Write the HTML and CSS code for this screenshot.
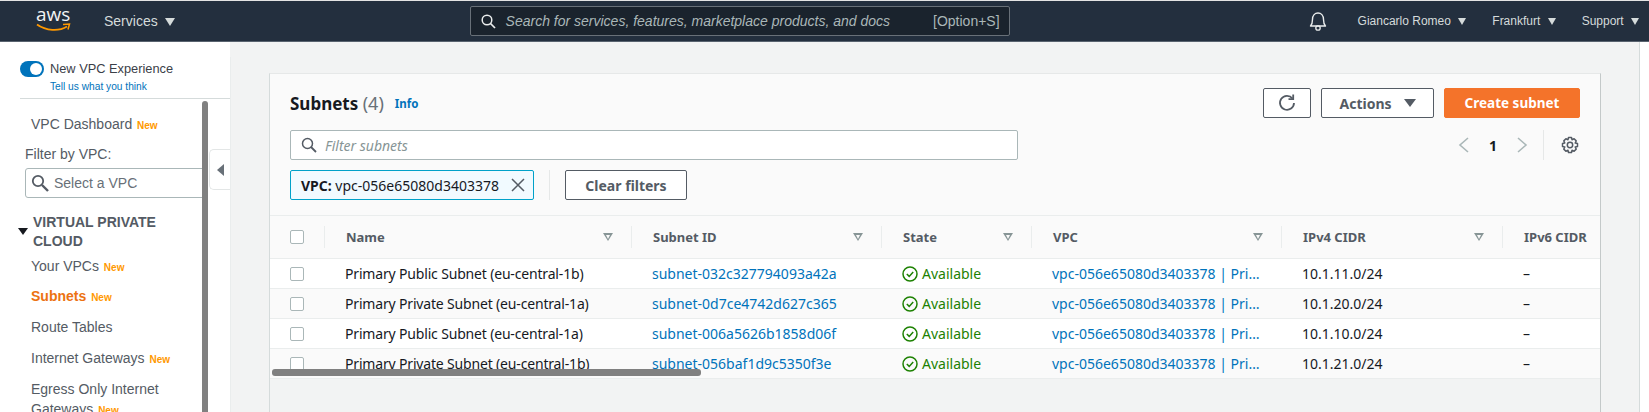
FILE: index.html
```html
<!DOCTYPE html>
<html>
  <head>
    <meta name="viewport" content="width=device-width, initial-scale=1" />
    <link rel="stylesheet" href="styles.css">
  </head>
  <body>
    <header class="topbar">
      <div class="logo">
        <span class="logo-text">aws</span>
        <svg class="logo-smile" width="36" height="9" viewBox="0 0 36 9"><path d="M1 1.5C10 8 23 8.500 31 3.500" fill="none" stroke="#f90" stroke-width="1.800"/><path d="M27 1.500L33.500 1L32 6.500" fill="none" stroke="#f90" stroke-width="1.500"/></svg>
      </div>
      <span class="top-link services">Services <i class="caret caret-top"></i></span>
      <div class="top-search">
        <svg width="15" height="15" viewBox="0 0 15 15"><circle cx="6" cy="6" r="4.800" fill="none" stroke="#eaeded" stroke-width="1.500"/><path d="M9.500 9.500L14 14" stroke="#eaeded" stroke-width="1.700"/></svg>
        <span class="top-search-text">Search for services, features, marketplace products, and docs</span>
        <span class="top-search-key">[Option+S]</span>
      </div>
      <div class="top-right">
        <svg class="bell" width="18" height="20" viewBox="0 0 18 20"><path d="M1.500 15C3.500 13 3.500 11.500 3.500 8.500C3.500 4.500 6 2 9 2C12 2 14.500 4.500 14.500 8.500C14.500 11.500 14.500 13 16.500 15Z" fill="none" stroke="#eaeded" stroke-width="1.400" stroke-linejoin="round"/><circle cx="9" cy="17" r="2.200" fill="none" stroke="#eaeded" stroke-width="1.300"/></svg>
        <span class="top-link user">Giancarlo Romeo <i class="caret caret-top"></i></span>
        <span class="top-link region">Frankfurt <i class="caret caret-top"></i></span>
        <span class="top-link support">Support <i class="caret caret-top"></i></span>
      </div>
    </header>

    <div class="page">
      <nav class="sidebar">
        <div class="experience">
          <span class="toggle"></span>
          <div>
            <div class="experience-title">New VPC Experience</div>
            <a class="experience-link">Tell us what you think</a>
          </div>
        </div>
        <div class="nav-item nav-dash">VPC Dashboard <span class="new">New</span></div>
        <div class="filter-label">Filter by VPC:</div>
        <div class="vpc-select">
          <svg width="18" height="18" viewBox="0 0 18 18"><circle cx="7" cy="7" r="5.200" fill="none" stroke="#545b64" stroke-width="1.800"/><path d="M11 11L17 17" stroke="#545b64" stroke-width="2.400"/></svg>
          <span>Select a VPC</span>
        </div>
        <div class="nav-group">
          <i class="group-caret"></i>
          <span>VIRTUAL PRIVATE CLOUD</span>
        </div>
        <div class="nav-item nav-first">Your VPCs <span class="new">New</span></div>
        <div class="nav-item nav-active">Subnets <span class="new">New</span></div>
        <div class="nav-item">Route Tables</div>
        <div class="nav-item">Internet Gateways <span class="new">New</span></div>
        <div class="nav-item nav-wrap">Egress Only Internet Gateways <span class="new">New</span></div>
        <div class="side-scroll"></div>
        <div class="collapse-tab"><i></i></div>
      </nav>

      <main class="content">
        <section class="card">
          <div class="card-head">
            <div class="title-row">
              <h1>Subnets <span class="count">(4)</span></h1>
              <a class="info">Info</a>
              <div class="actions">
                <button class="btn btn-icon" type="button">
                  <svg width="18" height="18" viewBox="0 0 18 18"><path d="M14.500 4.500A7 7 0 1 0 16 9" fill="none" stroke="#545b64" stroke-width="1.800"/><path d="M10.500 5.200H15.200V.5" fill="none" stroke="#545b64" stroke-width="1.800"/></svg>
                </button>
                <button class="btn btn-actions" type="button">Actions <i class="caret caret-btn"></i></button>
                <button class="btn btn-primary" type="button">Create subnet</button>
              </div>
            </div>
            <div class="filter-row">
              <div class="filter-input">
                <svg width="16" height="16" viewBox="0 0 16 16"><circle cx="6.500" cy="6.500" r="5" fill="none" stroke="#545b64" stroke-width="1.500"/><path d="M10 10L15 15" stroke="#545b64" stroke-width="1.800"/></svg>
                <span>Filter subnets</span>
              </div>
              <div class="pager">
                <svg width="12" height="18" viewBox="0 0 12 18"><path d="M10 2L2 9L10 16" fill="none" stroke="#aab7b8" stroke-width="1.600"/></svg>
                <b>1</b>
                <svg width="12" height="18" viewBox="0 0 12 18"><path d="M2 2L10 9L2 16" fill="none" stroke="#aab7b8" stroke-width="1.600"/></svg>
                <span class="pager-sep"></span>
                <svg width="18" height="18" viewBox="0 0 18 18"><circle cx="9" cy="9" r="2.700" fill="none" stroke="#545b64" stroke-width="1.500"/><path d="M7.500 1.500H10.500L11 3.700L13.100 2.800L15.200 4.900L14.200 7L16.500 7.500V10.500L14.200 11L15.200 13.100L13.100 15.200L11 14.300L10.500 16.500H7.500L7 14.300L4.900 15.200L2.800 13.100L3.800 11L1.500 10.500V7.500L3.800 7L2.800 4.900L4.900 2.800L7 3.700Z" fill="none" stroke="#545b64" stroke-width="1.500" stroke-linejoin="round"/></svg>
              </div>
            </div>
            <div class="chip-row">
              <div class="chip"><span><b>VPC:</b> vpc-056e65080d3403378</span>
                <svg width="14" height="14" viewBox="0 0 14 14"><path d="M1 1L13 13M13 1L1 13" stroke="#545b64" stroke-width="1.500"/></svg>
              </div>
              <span class="chip-sep"></span>
              <button class="btn btn-clear" type="button">Clear filters</button>
            </div>
          </div>

          <div class="table-wrap">
            <table class="subnets">
              <colgroup>
                <col class="col-check"><col class="col-name"><col class="col-id"><col class="col-state"><col class="col-vpc"><col class="col-cidr"><col class="col-v6">
              </colgroup>
              <thead>
                <tr>
                  <th class="cell-check"><i class="check"></i></th>
                  <th><div class="th-in">Name <i class="sort"></i></div></th>
                  <th><div class="th-in">Subnet ID <i class="sort"></i></div></th>
                  <th><div class="th-in">State <i class="sort"></i></div></th>
                  <th><div class="th-in">VPC <i class="sort"></i></div></th>
                  <th><div class="th-in">IPv4 CIDR <i class="sort"></i></div></th>
                  <th><div class="th-in">IPv6 CIDR</div></th>
                </tr>
              </thead>
              <tbody>
                <tr>
                  <td class="cell-check"><i class="check"></i></td>
                  <td class="cell-name">Primary Public Subnet (eu-central-1b)</td>
                  <td><a>subnet-032c327794093a42a</a></td>
                  <td><span class="state"><svg width="16" height="16" viewBox="0 0 16 16"><circle cx="8" cy="8" r="7" fill="none" stroke="#1d8102" stroke-width="1.500"/><path d="M4.800 8L7.200 10.400L11.200 6" fill="none" stroke="#1d8102" stroke-width="1.500"/></svg>Available</span></td>
                  <td><a>vpc-056e65080d3403378 | Pri…</a></td>
                  <td>10.1.11.0/24</td>
                  <td>–</td>
                </tr>
                <tr>
                  <td class="cell-check"><i class="check"></i></td>
                  <td class="cell-name">Primary Private Subnet (eu-central-1a)</td>
                  <td><a>subnet-0d7ce4742d627c365</a></td>
                  <td><span class="state"><svg width="16" height="16" viewBox="0 0 16 16"><circle cx="8" cy="8" r="7" fill="none" stroke="#1d8102" stroke-width="1.500"/><path d="M4.800 8L7.200 10.400L11.200 6" fill="none" stroke="#1d8102" stroke-width="1.500"/></svg>Available</span></td>
                  <td><a>vpc-056e65080d3403378 | Pri…</a></td>
                  <td>10.1.20.0/24</td>
                  <td>–</td>
                </tr>
                <tr>
                  <td class="cell-check"><i class="check"></i></td>
                  <td class="cell-name">Primary Public Subnet (eu-central-1a)</td>
                  <td><a>subnet-006a5626b1858d06f</a></td>
                  <td><span class="state"><svg width="16" height="16" viewBox="0 0 16 16"><circle cx="8" cy="8" r="7" fill="none" stroke="#1d8102" stroke-width="1.500"/><path d="M4.800 8L7.200 10.400L11.200 6" fill="none" stroke="#1d8102" stroke-width="1.500"/></svg>Available</span></td>
                  <td><a>vpc-056e65080d3403378 | Pri…</a></td>
                  <td>10.1.10.0/24</td>
                  <td>–</td>
                </tr>
                <tr>
                  <td class="cell-check"><i class="check"></i></td>
                  <td class="cell-name">Primary Private Subnet (eu-central-1b)</td>
                  <td><a>subnet-056baf1d9c5350f3e</a></td>
                  <td><span class="state"><svg width="16" height="16" viewBox="0 0 16 16"><circle cx="8" cy="8" r="7" fill="none" stroke="#1d8102" stroke-width="1.500"/><path d="M4.800 8L7.200 10.400L11.200 6" fill="none" stroke="#1d8102" stroke-width="1.500"/></svg>Available</span></td>
                  <td><a>vpc-056e65080d3403378 | Pri…</a></td>
                  <td>10.1.21.0/24</td>
                  <td>–</td>
                </tr>
              </tbody>
            </table>
            <div class="table-scroll"></div>
          </div>
        </section>
      </main>
      <div class="right-rail"></div>
    </div>
  </body>
</html>
```
FILE: styles.css
```css
html,
body {
  margin: 0;
  height: 412px;
  overflow: hidden;
}

body {
  background: #f2f3f3;
  font-family: "Liberation Sans", Arial, sans-serif;
  color: #16191f;
}

/* top bar */
.topbar {
  display: flex;
  align-items: center;
  height: 40px;
  background: #232f3e;
  border-top: 1px solid #e4e4e4;
  border-bottom: 1px solid #59636f;
  color: #d5dbdb;
  font-size: 14px;
}

.logo {
  position: relative;
  width: 34px;
  height: 32px;
  margin-left: 36px;
}

.logo-text {
  display: block;
  color: #f2f3f3;
  font-family: "Open Sans", sans-serif;
  font-size: 19px;
  line-height: 22px;
  text-align: center;
  transform: translateY(-2px);
}

.logo-smile {
  position: absolute;
  left: 0;
  top: 18px;
}

.top-link {
  white-space: nowrap;
}

.services {
  margin-left: 34px;
  font-size: 14px;
}

.caret {
  display: inline-block;
  width: 0;
  height: 0;
  border-left: 5px solid transparent;
  border-right: 5px solid transparent;
  border-top: 8px solid #d5dbdb;
}

.caret-top {
  margin-left: 4px;
}

.services .caret-top {
  margin-left: 3px;
}

.top-search {
  display: flex;
  align-items: center;
  box-sizing: border-box;
  width: 540px;
  height: 30px;
  margin-left: 295px;
  padding: 0 9px 0 10px;
  background: #1a232d;
  border: 1px solid #687078;
  border-radius: 2px;
  color: #aab7b8;
}

.top-search-text {
  flex: 1;
  margin-left: 10px;
  font-style: italic;
  white-space: nowrap;
}

.top-right {
  display: flex;
  align-items: center;
  margin-left: 299px;
  font-size: 12px;
  white-space: nowrap;
}

.user {
  margin-left: 31px;
}

.region {
  margin-left: 26px;
}

.support {
  margin-left: 26px;
}

.top-right .caret {
  border-left-width: 4.500px;
  border-right-width: 4.500px;
  border-top-width: 7px;
}

/* sidebar */
.page {
  display: flex;
  height: 370px;
}

.sidebar {
  position: relative;
  box-sizing: border-box;
  flex: 0 0 230px;
  height: 370px;
  overflow: hidden;
  background: #fff;
  color: #545b64;
}

.experience {
  display: flex;
  height: 38px;
  margin: 18px 0 0 20px;
  border-bottom: 1px solid #d5dbdb;
}

.toggle {
  position: relative;
  box-sizing: border-box;
  width: 24px;
  height: 16px;
  margin: 1px 6px 0 0;
  background: #0073bb;
  border-radius: 8px;
}

.toggle::after {
  content: "";
  position: absolute;
  right: 2px;
  top: 2px;
  width: 12px;
  height: 12px;
  background: #fff;
  border-radius: 50%;
}

.experience-title {
  font-size: 12.800px;
  line-height: 18px;
  color: #3b4048;
}

.experience-link {
  display: block;
  margin-top: 1px;
  font-size: 10.200px;
  line-height: 16px;
  color: #0073bb;
}

.nav-item {
  margin-left: 31px;
  font-size: 14px;
  line-height: 20px;
  height: 20px;
  margin-top: 10.750px;
}

.nav-dash {
  margin-top: 15px;
}

.new {
  margin-left: 1px;
  color: #ff9900;
  font-size: 10px;
  font-weight: 700;
}

.filter-label {
  margin: 10px 0 0 25px;
  font-size: 14px;
  line-height: 20px;
}

.vpc-select {
  display: flex;
  align-items: center;
  box-sizing: border-box;
  width: 180px;
  height: 30px;
  margin: 4px 0 0 25px;
  padding-left: 5px;
  border: 1px solid #aab7b8;
  border-radius: 3px;
  font-size: 14px;
  color: #687078;
}

.vpc-select span {
  margin-left: 5px;
}

.nav-group {
  position: relative;
  box-sizing: border-box;
  width: 170px;
  margin-top: 15px;
  padding-left: 33px;
  font-size: 14px;
  font-weight: 700;
  line-height: 18.500px;
}

.group-caret {
  position: absolute;
  left: 18px;
  top: 15px;
  width: 0;
  height: 0;
  border-left: 5px solid transparent;
  border-right: 5px solid transparent;
  border-top: 7px solid #16191f;
}

.nav-first {
  margin-top: 5.500px;
}

.nav-active {
  color: #ec7211;
  font-weight: 700;
}

.nav-wrap {
  width: 165px;
  height: auto;
}

.side-scroll {
  position: absolute;
  left: 202px;
  top: 59px;
  bottom: 0;
  width: 6px;
  background: #808080;
  border-radius: 3px 3px 0 0;
}

.collapse-tab {
  position: absolute;
  left: 209px;
  top: 107px;
  box-sizing: border-box;
  width: 21px;
  height: 41px;
  background: #fff;
  border: 1px solid #e3e6e6;
  border-right: 0;
  border-radius: 5px 0 0 5px;
}

.collapse-tab i {
  position: absolute;
  left: 7px;
  top: 14px;
  width: 0;
  height: 0;
  border-top: 6px solid transparent;
  border-bottom: 6px solid transparent;
  border-right: 7px solid #687078;
}

/* main */
.content {
  flex: 1;
  box-sizing: border-box;
  height: 355px;
  margin-top: 15px;
  padding: 16px 38px 0 38px;
  min-width: 0;
  border-left: 1px solid #eaeded;
}

.right-rail {
  flex: 0 0 9px;
  background: #fff;
  border-left: 1px solid #d5dbdb;
}

.card {
  box-sizing: border-box;
  height: 339px;
  border-left: 1px solid #d5dbdb;
  border-right: 1px solid #c4c9c9;
  border-top: 1px solid #e6e8e8;
}

.card-head {
  box-sizing: border-box;
  height: 141px;
  padding: 14px 20px 0;
  background: #fafafa;
  font-family: "Noto Sans", sans-serif;
}

.title-row {
  display: flex;
  align-items: center;
  height: 30px;
}

h1 {
  margin: 0;
  font-size: 17px;
  font-weight: 700;
  line-height: 30px;
}

.count {
  color: #687078;
  font-size: 18px;
  font-weight: 400;
}

.info {
  margin-left: 11px;
  color: #0073bb;
  font-size: 11.500px;
  font-weight: 700;
}

.actions {
  display: flex;
  gap: 10px;
  margin-left: auto;
}

.btn {
  display: flex;
  align-items: center;
  justify-content: center;
  box-sizing: border-box;
  height: 30px;
  background: #fff;
  border: 1px solid #545b64;
  border-radius: 2px;
  color: #545b64;
  font-family: "Noto Sans", sans-serif;
  font-size: 14px;
  font-weight: 700;
}

.btn-icon {
  width: 48px;
}

.btn-actions {
  width: 113px;
}

.caret-btn {
  margin-left: 12px;
  border-top-color: #545b64;
  border-left-width: 6px;
  border-right-width: 6px;
}

.btn-primary {
  width: 136px;
  background: #f4732a;
  border-color: #f4732a;
  color: #fff;
  font-size: 13.500px;
}

.filter-row {
  display: flex;
  align-items: center;
  justify-content: space-between;
  margin-top: 12px;
}

.filter-input {
  display: flex;
  align-items: center;
  box-sizing: border-box;
  width: 728px;
  height: 30px;
  padding-left: 10px;
  background: #fff;
  border: 1px solid #aab7b8;
  border-radius: 2px;
  color: #879596;
  font-size: 14px;
  font-style: italic;
}

.filter-input span {
  margin-left: 8px;
}

.pager {
  display: flex;
  align-items: center;
  height: 30px;
  margin-right: 1px;
}

.pager b {
  margin: 0 19px;
  font-size: 14px;
  color: #16191f;
}

.pager-sep {
  width: 1px;
  height: 30px;
  margin: 0 17px 0 15px;
  background: #e6e8e8;
}

.chip-row {
  display: flex;
  align-items: center;
  margin-top: 10px;
}

.chip {
  display: flex;
  align-items: center;
  justify-content: space-between;
  box-sizing: border-box;
  width: 244px;
  height: 30px;
  padding: 0 8px 0 10px;
  background: #f1faff;
  border: 1px solid #00a1c9;
  border-radius: 2px;
  font-size: 14px;
  white-space: nowrap;
}

.chip-sep {
  width: 1px;
  height: 30px;
  margin: 0 15px;
  background: #e6e8e8;
}

.btn-clear {
  width: 122px;
}

/* table */
.table-wrap {
  position: relative;
  font-family: "Noto Sans", sans-serif;
}

.subnets {
  width: 1330px;
  border-collapse: collapse;
  table-layout: fixed;
  font-size: 14px;
}

.col-check { width: 54px; }
.col-name { width: 307px; }
.col-id { width: 250px; }
.col-state { width: 150px; }
.col-vpc { width: 250px; }
.col-cidr { width: 221px; }
.col-v6 { width: 98px; }

th {
  height: 42px;
  padding: 0;
  background: #fafafa;
  border-top: 1px solid #eaeded;
  border-bottom: 1px solid #eaeded;
  color: #545b64;
  font-size: 13px;
  font-weight: 700;
  text-align: left;
}

.th-in {
  display: flex;
  align-items: center;
  justify-content: space-between;
  box-sizing: border-box;
  height: 22px;
  padding: 0 18px 0 21px;
  border-left: 1px solid #eaeded;
  white-space: nowrap;
}

.sort {
  width: 0;
  height: 0;
  border-left: 5px solid transparent;
  border-right: 5px solid transparent;
  border-top: 8px solid #879596;
  position: relative;
}

.sort::after {
  content: "";
  position: absolute;
  left: -2.500px;
  top: -6.500px;
  width: 0;
  height: 0;
  border-left: 2.500px solid transparent;
  border-right: 2.500px solid transparent;
  border-top: 4px solid #fafafa;
}

td {
  height: 29px;
  padding: 0 0 0 21px;
  background: #fff;
  border-bottom: 1px solid #eaeded;
  white-space: nowrap;
  overflow: hidden;
}

tbody tr:nth-child(even) td {
  background: #fafafa;
}

.cell-check {
  padding: 0 0 0 20px;
}

.cell-name {
  letter-spacing: -0.170px;
}

.check {
  display: block;
  box-sizing: border-box;
  width: 14px;
  height: 14px;
  background: #fff;
  border: 1px solid #aab7b8;
  border-radius: 2px;
}

td a {
  color: #0073bb;
}

.state {
  display: flex;
  align-items: center;
  color: #1d8102;
}

.state svg {
  margin-right: 4px;
}

.table-scroll {
  position: absolute;
  left: 2px;
  top: 154px;
  width: 429px;
  height: 7px;
  background: #808080;
  border-radius: 3px;
}
```
